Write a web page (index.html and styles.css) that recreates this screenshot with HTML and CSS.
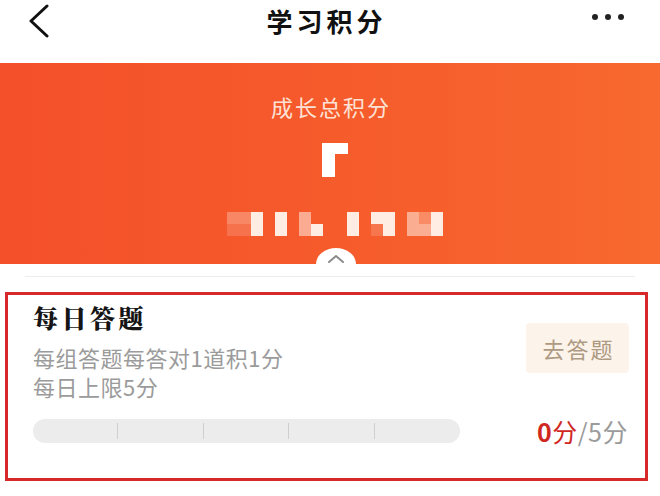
FILE: index.html
```html
<!DOCTYPE html>
<html lang="zh-CN">
<head>
    <meta charset="UTF-8">
    <meta name="viewport" content="width=device-width, initial-scale=1.0">
    <title>学习积分</title>
    <link rel="stylesheet" href="styles.css">
</head>
<body>
    <div class="page">
        <!-- Top bar -->
        <div class="topbar">
            <svg class="back" width="24" height="36" viewBox="0 0 24 36">
                <path d="M19 2 L3 17 L19 32" fill="none" stroke="#111" stroke-width="3" stroke-linecap="round" stroke-linejoin="round"/>
            </svg>
            <h1>学习积分</h1>
            <svg class="more" width="34" height="8" viewBox="0 0 34 8">
                <circle cx="4" cy="4" r="3" fill="#222"/>
                <circle cx="17" cy="4" r="3" fill="#222"/>
                <circle cx="30" cy="4" r="3" fill="#222"/>
            </svg>
        </div>

        <!-- Total points banner -->
        <div class="banner">
            <p class="banner-label">成长总积分</p>
            <div class="total-mask"></div>
            <div class="mosaic">
                <i class="c2"></i><i class="c1"></i>
                <i class="c2"></i><i class="c1"></i>
                <i class="c4"></i><i class="c4"></i>
                <i></i><i></i>
                <i class="c4"></i><i class="c4"></i>
                <i></i><i></i>
                <i class="c3"></i><i class="c3"></i>
                <i></i><i class="c4"></i>
                <i></i><i></i>
                <i></i><i></i>
                <i class="c4"></i><i class="c4"></i>
                <i></i><i></i>
                <i class="c4"></i><i class="c1"></i>
                <i class="c4"></i><i class="c4"></i>
                <i></i><i></i>
                <i class="c3"></i><i class="c3"></i>
                <i class="c2"></i><i class="c3"></i>
                <i class="c4"></i><i class="c4"></i>
            </div>
            <div class="collapse">
                <svg width="16" height="9" viewBox="0 0 16 9">
                    <path d="M1 8 L8 2 L15 8" fill="none" stroke="#8c8c8c" stroke-width="2" stroke-linecap="round" stroke-linejoin="round"/>
                </svg>
            </div>
        </div>

        <div class="divider"></div>

        <!-- Daily quiz task -->
        <div class="task">
            <h2 class="task-title">每日答题</h2>
            <div class="task-desc">
                <p>每组答题每答对1道积1分</p>
                <p>每日上限5分</p>
            </div>
            <button class="task-btn">去答题</button>
            <div class="progress">
                <span></span><span></span><span></span><span></span>
            </div>
            <div class="score"><b>0</b><em>分</em>/5分</div>
        </div>
    </div>
</body>
</html>
```

FILE: styles.css
```css
body {
    margin: 0;
    background-color: #fff;
    font-family: "Noto Sans CJK SC", "Noto Sans", sans-serif;
    color: #1a1a1a;
}
p, h1, h2 {
    margin: 0;
}
.page {
    width: 660px;
}
.topbar {
    display: grid;
    grid-template-columns: 1fr auto 1fr;
    align-items: start;
    height: 63px;
    padding: 0 35px 0 28px;
    box-sizing: border-box;
}
.back {
    margin-top: 4px;
}
.topbar h1 {
    margin-top: 6px;
    font-size: 26px;
    line-height: 30px;
    font-weight: 700;
    letter-spacing: 4px;
    color: #111;
}
.more {
    justify-self: end;
    margin-top: 13px;
}
.banner {
    height: 201px;
    box-sizing: border-box;
    padding-top: 31px;
    display: flex;
    flex-direction: column;
    align-items: center;
    background: linear-gradient(90deg, #f4502a 0%, #f65c2c 55%, #f7692e 100%);
}
.banner-label {
    font-size: 22px;
    line-height: 24px;
    letter-spacing: 2px;
    color: #fde2d6;
    padding-left: 2px;
}
.total-mask {
    margin: 25px 0 0 9px;
    width: 13px;
    height: 23px;
    border-top: 11px solid #fff;
    border-left: 13px solid #fff;
}
.mosaic {
    margin: 35px 0 0 10px;
    display: grid;
    grid-template-rows: repeat(2, 12px);
    grid-auto-columns: 12px;
    grid-auto-flow: column;
    filter: blur(0.6px);
}
.mosaic i {
    display: block;
}
.mosaic .c1 { background: rgba(255, 235, 225, 0.18); }
.mosaic .c2 { background: rgba(255, 235, 225, 0.32); }
.mosaic .c3 { background: rgba(255, 238, 230, 0.55); }
.mosaic .c4 { background: rgba(255, 248, 242, 0.92); }
.collapse {
    margin: 12px 0 0 12px;
    width: 40px;
    height: 16px;
    background: #fff;
    border-radius: 50% 50% 0 0 / 100% 100% 0 0;
    display: flex;
    justify-content: center;
    align-items: flex-end;
    padding-bottom: 1px;
    box-sizing: border-box;
}
.divider {
    height: 1px;
    margin: 12px 25px 0;
    background: #ececec;
}
.task {
    margin: 15px 12px 0 5px;
    height: 189px;
    box-sizing: border-box;
    border: 3px solid #d7282a;
    padding: 6px 16px 0 25px;
    display: grid;
    grid-template-columns: 1fr auto;
    grid-template-areas:
        "title btn"
        "desc btn"
        "bar score";
    align-content: start;
    align-items: center;
}
.task-title {
    grid-area: title;
    font-family: "Noto Serif CJK SC", "Noto Sans CJK SC", serif;
    font-size: 25px;
    line-height: 32px;
    font-weight: 900;
    letter-spacing: 3.5px;
    color: #151515;
}
.task-desc {
    grid-area: desc;
    margin-top: 10px;
    font-size: 22px;
    line-height: 29px;
    letter-spacing: 0.5px;
    color: #9b9b9b;
}
.task-btn {
    grid-area: btn;
    align-self: start;
    margin-top: 22px;
    width: 103px;
    height: 50px;
    border: none;
    border-radius: 4px;
    background: #fcf3ea;
    color: #ad9a82;
    font-family: inherit;
    font-size: 22px;
    letter-spacing: 2px;
    padding: 0 0 0 2px;
}
.progress {
    grid-area: bar;
    margin-top: 18px;
    width: 427px;
    height: 24px;
    border-radius: 12px;
    background: #ececec;
    display: grid;
    grid-template-columns: repeat(5, 1fr);
}
.progress span {
    border-right: 1px solid #cfcfcf;
    margin: 4px 0;
}
.score {
    grid-area: score;
    justify-self: end;
    margin-top: 18px;
    margin-right: 1px;
    font-size: 25px;
    line-height: 24px;
    letter-spacing: 0.5px;
    color: #9b9b9b;
}
.score b {
    color: #d0281f;
}
.score em {
    font-style: normal;
    color: #d0281f;
}
```
